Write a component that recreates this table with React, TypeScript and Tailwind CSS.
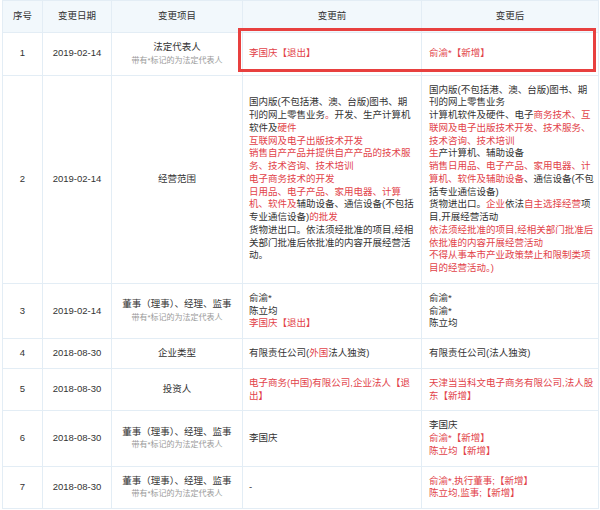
import type { ReactNode } from "react";

const R = ({ children }: { children: ReactNode }) => <span className="text-[#e2434a]">{children}</span>;

function Item({ name, note }: { name: string; note?: boolean }) {
  return (
    <div>
      <div>{name}</div>
      {note && <div className="text-[8px] leading-[13px] text-[#9a9a9a]">带有*标记的为法定代表人</div>}
    </div>
  );
}

// each entry is one visual line, so wrapping matches the original
function Lines({ lines }: { lines: ReactNode[] }) {
  return (
    <div>
      {lines.map((l, i) => (
        <div key={i} className="whitespace-nowrap">
          {l}
        </div>
      ))}
    </div>
  );
}

const DIRECTORS = "董事（理事）、经理、监事";

type Row = { no: number; date: string; item: ReactNode; before: ReactNode; after: ReactNode };

const rows: Row[] = [
  {
    no: 1,
    date: "2019-02-14",
    item: <Item name="法定代表人" note />,
    before: <R>李国庆【退出】</R>,
    after: <R>俞渝*【新增】</R>,
  },
  {
    no: 2,
    date: "2019-02-14",
    item: <Item name="经营范围" />,
    before: (
      <Lines
        lines={[
          "国内版(不包括港、澳、台版)图书、期",
          <>刊的网上零售业务<R>。</R>开发、生产计算机</>,
          <>软件及<R>硬件</R></>,
          <R>互联网及电子出版技术开发</R>,
          <R>销售自产产品并提供自产产品的技术服</R>,
          <R>务、技术咨询、技术培训</R>,
          <R>电子商务技术的开发</R>,
          <R>日用品、电子产品、家用电器、计算</R>,
          <><R>机、软件及</R>辅助设备、通信设备(不包括</>,
          <>专业通信设备)<R>的批发</R></>,
          "货物进出口。依法须经批准的项目,经相",
          "关部门批准后依批准的内容开展经营活",
          "动。",
        ]}
      />
    ),
    after: (
      <Lines
        lines={[
          "国内版(不包括港、澳、台版)图书、期",
          "刊的网上零售业务",
          <>计算机软件及硬件、电子<R>商务技术、互</R></>,
          <R>联网及电子出版技术开发、技术服务、</R>,
          <R>技术咨询、技术培训</R>,
          <><R>生</R>产计算机、辅助设备</>,
          <R>销售日用品、电子产品、家用电器、计</R>,
          <><R>算机、软件及辅助设备</R>、通信设备(不包</>,
          "括专业通信设备)",
          <>货物进出口。<R>企业</R>依法<R>自主选择经营</R>项</>,
          "目,开展经营活动",
          <R>依法须经批准的项目,经相关部门批准后</R>,
          <R>依批准的内容开展经营活动</R>,
          <R>不得从事本市产业政策禁止和限制类项</R>,
          <R>目的经营活动。)</R>,
        ]}
      />
    ),
  },
  {
    no: 3,
    date: "2019-02-14",
    item: <Item name={DIRECTORS} note />,
    before: <Lines lines={["俞渝*", "陈立均", <R>李国庆【退出】</R>]} />,
    after: <Lines lines={["俞渝*", "俞渝*", "陈立均"]} />,
  },
  {
    no: 4,
    date: "2018-08-30",
    item: <Item name="企业类型" />,
    before: <>有限责任公司(<R>外国</R>法人独资)</>,
    after: "有限责任公司(法人独资)",
  },
  {
    no: 5,
    date: "2018-08-30",
    item: <Item name="投资人" />,
    before: <Lines lines={[<R>电子商务(中国)有限公司,企业法人【退</R>, <R>出】</R>]} />,
    after: <Lines lines={[<R>天津当当科文电子商务有限公司,法人股</R>, <R>东【新增】</R>]} />,
  },
  {
    no: 6,
    date: "2018-08-30",
    item: <Item name={DIRECTORS} note />,
    before: "李国庆",
    after: <Lines lines={["李国庆", <R>俞渝*【新增】</R>, <R>陈立均【新增】</R>]} />,
  },
  {
    no: 7,
    date: "2018-08-30",
    item: <Item name={DIRECTORS} note />,
    before: "-",
    after: <Lines lines={[<R>俞渝*,执行董事;【新增】</R>, <R>陈立均,监事;【新增】</R>]} />,
  },
];

export default function App() {
  const th = "border border-[#e3edf5] bg-[#f2f8fc] py-[9px] font-normal text-center";
  const td = "border border-[#e3edf5] py-2 align-middle";
  return (
    <div className="w-[600px] h-[510px] overflow-hidden bg-white font-['Liberation_Sans','Noto_Sans_CJK_SC',sans-serif] text-[9.5px] leading-[12.75px] text-[#333]">
      <div className="relative ml-[2px] w-[596px]">
        <table className="w-[596px] table-fixed border-collapse">
          <colgroup>
            <col className="w-[40px]" />
            <col className="w-[69px]" />
            <col className="w-[131px]" />
            <col className="w-[179px]" />
            <col className="w-[177px]" />
          </colgroup>
          <thead>
            <tr>
              <th className={th}>序号</th>
              <th className={th}>变更日期</th>
              <th className={th}>变更项目</th>
              <th className={th}>变更前</th>
              <th className={th}>变更后</th>
            </tr>
          </thead>
          <tbody>
            {rows.map((r) => (
              <tr key={r.no}>
                <td className={`${td} text-center`}>{r.no}</td>
                <td className={`${td} text-center`}>{r.date}</td>
                <td className={`${td} text-center`}>{r.item}</td>
                <td className={`${td} pl-[6px] pr-[6px]`}>{r.before}</td>
                <td className={`${td} pl-[7px] pr-[4px]`}>{r.after}</td>
              </tr>
            ))}
          </tbody>
        </table>
        {/* highlight frame over row 1 */}
        <div className="pointer-events-none absolute left-[236px] top-[28px] h-[44px] w-[358px] border-[3px] border-[#e8403f]" />
      </div>
    </div>
  );
}
